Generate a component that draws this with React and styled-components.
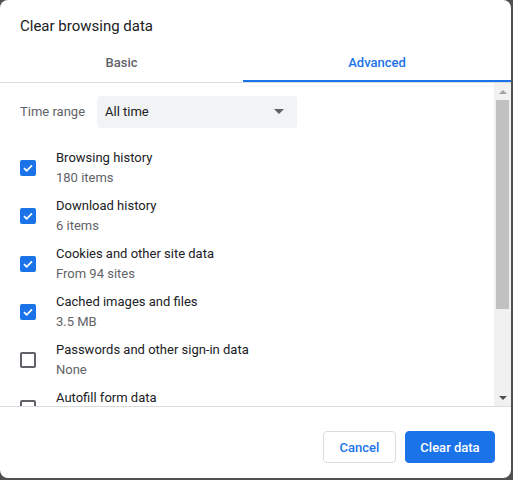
import React from "react";
import styled, { createGlobalStyle } from "styled-components";

const GlobalStyle = createGlobalStyle`
  html, body {
    margin: 0;
    padding: 0;
    background: #505050;
    font-family: Roboto, "Noto Sans", Arial, sans-serif;
  }
`;

const items = [
  { title: "Browsing history", sub: "180 items", checked: true },
  { title: "Download history", sub: "6 items", checked: true },
  { title: "Cookies and other site data", sub: "From 94 sites", checked: true },
  { title: "Cached images and files", sub: "3.5 MB", checked: true },
  { title: "Passwords and other sign-in data", sub: "None", checked: false },
  { title: "Autofill form data", sub: "", checked: false },
];

const Dialog = styled.div`
  width: 511px;
  height: 478px;
  background: #fff;
  border-radius: 8px;
  display: flex;
  flex-direction: column;
  overflow: hidden;
`;

const Title = styled.h1`
  margin: 0;
  padding: 16px 20px 6px;
  font-size: 15px;
  line-height: 20px;
  font-weight: 400;
  color: #202124;
`;

const Tabs = styled.div`
  display: flex;
  border-bottom: 1px solid #dadce0;
`;

const Tab = styled.div`
  flex: ${(p) => (p.$wide ? "0 0 268px" : "1")};
  height: 40px;
  box-sizing: border-box;
  display: flex;
  align-items: center;
  justify-content: center;
  font-size: 13px;
  font-weight: 500;
  color: ${(p) => (p.$active ? "#1a73e8" : "#5f6368")};
  border-bottom: 2px solid ${(p) => (p.$active ? "#1a73e8" : "transparent")};
  padding-top: 2px;
`;

const Body = styled.div`
  flex: 1;
  display: flex;
  min-height: 0;
`;

const Content = styled.div`
  flex: 1;
  overflow: hidden;
  padding-top: 13px;
`;

const RangeRow = styled.div`
  display: flex;
  align-items: center;
  padding: 0 20px;
  margin-bottom: 16px;
  line-height: 18px;
`;

const Label = styled.span`
  font-size: 13px;
  color: #5f6368;
  width: 77px;
  margin-top: -1px;
`;

const Select = styled.div`
  width: 200px;
  height: 32px;
  box-sizing: border-box;
  background: #f1f3f4;
  border-radius: 4px;
  display: flex;
  align-items: center;
  justify-content: space-between;
  padding: 0 8px 1px 8px;
  font-size: 13px;
  color: #202124;
`;

const Caret = styled.span`
  width: 0;
  height: 0;
  border-left: 5px solid transparent;
  border-right: 5px solid transparent;
  border-top: 5px solid #5f6368;
  margin-right: 5px;
`;

const Item = styled.div`
  display: flex;
  align-items: center;
  padding: 4px 20px;
  height: 40px;
`;

const Box = styled.span`
  flex-shrink: 0;
  width: 16px;
  height: 16px;
  box-sizing: border-box;
  border-radius: 2px;
  margin-right: 20px;
  display: flex;
  align-items: center;
  justify-content: center;
  background: ${(p) => (p.$checked ? "#1a73e8" : "#fff")};
  border: ${(p) => (p.$checked ? "none" : "2px solid #5f6368")};
`;

const Texts = styled.div`
  display: flex;
  flex-direction: column;
  height: 40px;
  font-size: 13px;
  line-height: 20px;
`;

const ItemTitle = styled.span`
  color: #202124;
`;

const ItemSub = styled.span`
  color: #5f6368;
  min-height: 20px;
`;

const Scrollbar = styled.div`
  width: 17px;
  background: #f1f1f1;
  display: flex;
  flex-direction: column;
  align-items: center;
`;

const Arrow = styled.span`
  height: 17px;
  width: 17px;
  display: flex;
  align-items: center;
  justify-content: center;
  &::after {
    content: "";
    border-left: 4px solid transparent;
    border-right: 4px solid transparent;
    ${(p) =>
      p.$down
        ? "border-top: 4px solid #505050;"
        : "border-bottom: 4px solid #a3a3a3;"}
  }
`;

const Thumb = styled.div`
  width: 13px;
  height: 209px;
  background: #c1c1c1;
`;

const Track = styled.div`
  flex: 1;
`;

const Footer = styled.div`
  border-top: 1px solid #dadce0;
  display: flex;
  justify-content: flex-end;
  gap: 9px;
  padding: 24px 16px 15px;
`;

const Button = styled.button`
  height: 32px;
  width: ${(p) => (p.$primary ? "90px" : "73px")};
  box-sizing: border-box;
  border-radius: 4px;
  font-family: inherit;
  font-size: 13px;
  font-weight: 500;
  padding: 0;
  background: ${(p) => (p.$primary ? "#1a73e8" : "#fff")};
  color: ${(p) => (p.$primary ? "#fff" : "#1a73e8")};
  border: 1px solid ${(p) => (p.$primary ? "#1a73e8" : "#dadce0")};
`;

const Check = () => (
  <svg width="12" height="12" viewBox="0 0 12 12">
    <path d="M2 6.2 L4.7 8.8 L10 3.4" fill="none" stroke="#fff" strokeWidth="1.8" />
  </svg>
);

export default function App() {
  return (
    <>
      <GlobalStyle />
      <Dialog>
        <Title>Clear browsing data</Title>
        <Tabs>
          <Tab>Basic</Tab>
          <Tab $active $wide>Advanced</Tab>
        </Tabs>
        <Body>
          <Content>
            <RangeRow>
              <Label>Time range</Label>
              <Select>
                All time
                <Caret />
              </Select>
            </RangeRow>
            {items.map((it) => (
              <Item key={it.title}>
                <Box $checked={it.checked}>{it.checked && <Check />}</Box>
                <Texts>
                  <ItemTitle>{it.title}</ItemTitle>
                  <ItemSub>{it.sub}</ItemSub>
                </Texts>
              </Item>
            ))}
          </Content>
          <Scrollbar>
            <Arrow />
            <Thumb />
            <Track />
            <Arrow $down />
          </Scrollbar>
        </Body>
        <Footer>
          <Button>Cancel</Button>
          <Button $primary>Clear data</Button>
        </Footer>
      </Dialog>
    </>
  );
}
